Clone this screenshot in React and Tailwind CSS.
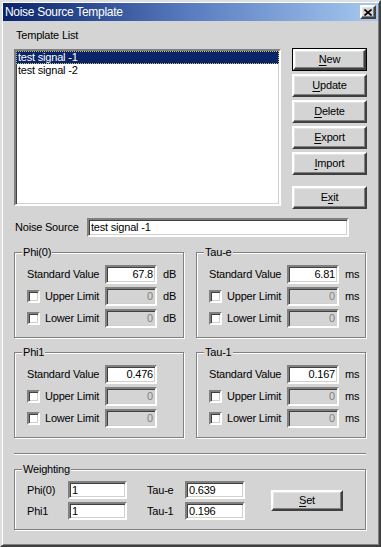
import React from 'react';

const sunken =
  'border-2 border-t-[#808080] border-l-[#808080] border-b-white border-r-white shadow-[inset_1px_1px_0_#404040,inset_-1px_-1px_0_#d4d0c8]';
const raised =
  'border-2 border-t-white border-l-white border-b-[#404040] border-r-[#404040] shadow-[inset_-1px_-1px_0_#808080,inset_1px_1px_0_#e4e4e4]';

function Btn({ label, under, isDefault, className = '' }) {
  const i = label.indexOf(under);
  const text = (
    <span>
      {label.slice(0, i)}
      <span className="underline underline-offset-[2px]">{under}</span>
      {label.slice(i + 1)}
    </span>
  );
  if (isDefault) {
    return (
      <div className={`border border-black ${className}`}>
        <div className={`${raised} h-full flex items-center justify-center bg-[#d4d4d4]`}>{text}</div>
      </div>
    );
  }
  return <div className={`${raised} flex items-center justify-center bg-[#d4d4d4] ${className}`}>{text}</div>;
}

function Field({ value, disabled, align = 'right', className = '' }) {
  return (
    <div
      className={`${sunken} h-[19px] flex items-center px-[2px] leading-none ${
        align === 'right' ? 'justify-end' : 'justify-start'
      } ${disabled ? 'bg-[#d4d4d4] text-[#808080]' : 'bg-white text-black'} ${className}`}
    >
      {value}
    </div>
  );
}

function Check() {
  return <div className={`${sunken} w-[13px] h-[13px] bg-white`} />;
}

function Group({ title, className = '', children }) {
  return (
    <div
      className={`relative border border-[#808080] shadow-[inset_1px_1px_0_white,1px_1px_0_white] ${className}`}
    >
      <span className="absolute -top-[7px] left-[7px] px-[1px] bg-[#d4d4d4] leading-[13px]">{title}</span>
      {children}
    </div>
  );
}

function LimitGroup({ title, std, unit }) {
  return (
    <Group title={title} className="w-[170px] h-[86px]">
      <div className="pt-[12px] pl-[12px] flex flex-col gap-[3px]">
        <div className="flex items-center h-[19px]">
          <span className="w-[78px]">Standard Value</span>
          <Field value={std} className="w-[52px]" />
          {unit && <span className="ml-[6px]">{unit}</span>}
        </div>
        {['Upper Limit', 'Lower Limit'].map((l) => (
          <div key={l} className="flex items-center h-[19px]">
            <div className="w-[78px] flex items-center gap-[5px]">
              <Check />
              <span>{l}</span>
            </div>
            <Field value="0" disabled className="w-[52px]" />
            {unit && <span className="ml-[6px]">{unit}</span>}
          </div>
        ))}
      </div>
    </Group>
  );
}

export default function App() {
  return (
    <div className="w-[381px] h-[547px] bg-[#d4d4d4] border-2 border-t-[#dfdfdf] border-l-[#dfdfdf] border-b-[#404040] border-r-[#404040] shadow-[inset_1px_1px_0_white,inset_-1px_-1px_0_#808080] p-[1px] font-['Liberation_Sans',Arial,sans-serif] text-[11px] tracking-[-0.2px] text-black leading-[13px]">
      {/* title bar */}
      <div className="h-[18px] flex items-center justify-between bg-gradient-to-r from-[#0a246a] via-[#5a7cc0] to-[#a6caf0] pl-[2px] pr-[2px]">
        <span className="text-white text-[12px] tracking-[-0.3px]">Noise Source Template</span>
        <div className={`${raised} w-[16px] h-[14px] bg-[#d4d4d4] flex items-center justify-center`}>
          <svg width="8" height="7" viewBox="0 0 8 7">
            <path d="M0.5 0.5 L7.5 6.5 M7.5 0.5 L0.5 6.5" stroke="black" strokeWidth="1.6" />
          </svg>
        </div>
      </div>

      <div className="pl-[11px]">
        <div className="mt-[8px] ml-[2px] h-[13px]">Template List</div>

        <div className="mt-[6px] flex items-start">
          <div className={`${sunken} mt-[1px] w-[267px] h-[157px] bg-white`}>
            <div className="h-[13px] bg-[#0a246a] text-white pl-[2px] outline outline-1 outline-dotted outline-[#c8c060] -outline-offset-1">
              test signal -1
            </div>
            <div className="h-[13px] pl-[2px]">test signal -2</div>
          </div>
          <div className="ml-[11px] flex flex-col gap-[3px]">
            <Btn label="New" under="N" isDefault className="w-[75px] h-[23px]" />
            <Btn label="Update" under="U" className="w-[75px] h-[23px]" />
            <Btn label="Delete" under="D" className="w-[75px] h-[23px]" />
            <Btn label="Export" under="E" className="w-[75px] h-[23px]" />
            <Btn label="Import" under="I" className="w-[75px] h-[23px]" />
            <Btn label="Exit" under="x" className="w-[75px] h-[23px] mt-[8px]" />
          </div>
        </div>

        <div className="mt-[9px] flex items-center h-[19px]">
          <span className="w-[73px] pl-[1px]">Noise Source</span>
          <Field value="test signal -1" align="left" className="w-[262px]" />
        </div>

        <div className="mt-[15px] flex gap-[12px]">
          <LimitGroup title="Phi(0)" std="67.8" unit="dB" />
          <LimitGroup title="Tau-e" std="6.81" unit="ms" />
        </div>

        <div className="mt-[14px] flex gap-[12px]">
          <LimitGroup title="Phi1" std="0.476" />
          <LimitGroup title="Tau-1" std="0.167" unit="ms" />
        </div>

        <div className="mt-[15px] w-[352px] h-[2px] border-t border-t-[#808080] border-b border-b-white" />

        <Group title="Weighting" className="mt-[14px] w-[352px] h-[61px]">
          <div className="pt-[11px] pl-[12px] flex items-center">
            <div className="grid grid-cols-[41px_59px_58px_60px] gap-y-[3px] items-center">
              <span>Phi(0)</span>
              <Field value="1" align="left" className="!h-[18px]" />
              <span className="pl-[20px]">Tau-e</span>
              <Field value="0.639" align="left" className="!h-[18px]" />
              <span>Phi1</span>
              <Field value="1" align="left" className="!h-[18px]" />
              <span className="pl-[20px]">Tau-1</span>
              <Field value="0.196" align="left" className="!h-[18px]" />
            </div>
            <Btn label="Set" under="S" className="ml-[26px] w-[72px] h-[21px]" />
          </div>
        </Group>
      </div>
    </div>
  );
}
